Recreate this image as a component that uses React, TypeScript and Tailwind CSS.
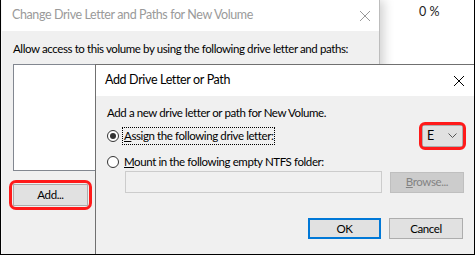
import React from 'react';

const font = { fontFamily: 'Lato, "Liberation Sans", Arial, sans-serif' };

function CloseIcon({ className }: { className?: string }) {
    return (
        <svg width="12" height="12" viewBox="0 0 12 12" className={className}>
            <path d="M1 1 L11 11 M11 1 L1 11" stroke="currentColor" strokeWidth="1" />
        </svg>
    );
}

function Radio({ checked }: { checked?: boolean }) {
    return (
        <span className="flex h-[12px] w-[12px] shrink-0 items-center justify-center rounded-full border border-[#333] bg-white">
            {checked && <span className="h-[6px] w-[6px] rounded-full bg-[#333]" />}
        </span>
    );
}

function OuterDialog() {
    return (
        <div className="absolute left-[1px] top-0 flex h-[254px] w-[378px] flex-col border-r border-[#bdbdbd] shadow-[4px_0_10px_rgba(0,0,0,0.18)]">
            <div className="flex h-[31px] items-center justify-between bg-white pl-[10px] pr-[8px]">
                <span className="whitespace-nowrap text-[12.5px] tracking-[-0.4px] text-[#9a9a9a]">Change Drive Letter and Paths for New Volume</span>
                <CloseIcon className="text-[#9a9a9a]" />
            </div>
            <div className="flex-1 bg-[#f0f0f0] px-[11px] text-[11.5px] tracking-[-0.4px]">
                <div className="mt-[10px] whitespace-nowrap leading-[16px] text-black">
                    Allow access to this volume by using the following drive letter and paths:
                </div>
                <div className="mt-[7px] h-[107px] w-[300px] border border-[#828790] bg-white" />
                <div className="mt-[13px] inline-flex rounded-[3px] p-0 outline-3 outline-offset-[1px] outline-[#ff1a1a]">
                    <div className="flex h-[22px] w-[75px] items-center justify-center border border-[#adadad] bg-[#e1e1e1] text-black">
                        Add...
                    </div>
                </div>
            </div>
        </div>
    );
}

function InnerDialog() {
    return (
        <div className="absolute left-[94px] top-[64px] flex h-[191px] w-[381px] flex-col border border-[#707070] bg-[#f0f0f0]">
            <div className="flex h-[31px] items-center justify-between bg-white pl-[9px] pr-[10px]">
                <span className="whitespace-nowrap text-[12.5px] tracking-[-0.35px] text-black">Add Drive Letter or Path</span>
                <CloseIcon className="text-black" />
            </div>
            <div className="flex flex-1 flex-col whitespace-nowrap px-[11px] text-[11.5px] leading-[16px] tracking-[-0.4px] text-black">
                <div className="mt-[9px]">Add a new drive letter or path for New Volume.</div>
                <div className="mt-[4px] flex items-center justify-between">
                    <div className="flex items-center gap-[3px]">
                        <Radio checked />
                        <span className="border border-dotted border-black px-[1px]">
                            <span className="underline">A</span>ssign the following drive letter:
                        </span>
                    </div>
                    <div className="mr-[1px] rounded-[3px] outline-3 outline-offset-[0px] outline-[#ff1a1a]">
                        <div className="flex h-[22px] w-[41px] items-center justify-between border border-[#adadad] bg-[#e1e1e1] pl-[4px] pr-[5px]">
                            <span className="text-[12.5px]">E</span>
                            <svg width="9" height="6" viewBox="0 0 9 6">
                                <path d="M0.5 0.5 L4.5 4.5 L8.5 0.5" stroke="#555" fill="none" strokeWidth="1" />
                            </svg>
                        </div>
                    </div>
                </div>
                <div className="mt-[7px] flex items-center gap-[3px] pl-0">
                    <Radio />
                    <span className="px-[2px]">
                        <span className="underline">M</span>ount in the following empty NTFS folder:
                    </span>
                </div>
                <div className="mt-[1px] flex items-center pl-[18px]">
                    <div className="h-[22px] w-[257px] border border-[#cccccc] bg-[#f0f0f0]" />
                    <div className="ml-[8px] flex h-[21px] w-[74px] items-center justify-center border border-[#bfbfbf] bg-[#cccccc] text-[#838383]">
                        <span><span className="underline">B</span>rowse...</span>
                    </div>
                </div>
                <div className="mt-[25px] flex justify-end gap-[8px] pr-[1px]">
                    <div className="flex h-[21px] w-[73px] items-center justify-center border-2 border-[#0078d7] bg-[#e1e1e1]">OK</div>
                    <div className="flex h-[21px] w-[74px] items-center justify-center border border-[#adadad] bg-[#e1e1e1]">Cancel</div>
                </div>
            </div>
        </div>
    );
}

export default function App() {
    return (
        <div className="relative h-[255px] w-[475px] overflow-hidden border-x border-b border-black bg-white" style={font}>
            <div className="absolute left-[418px] top-[3px] text-[12.5px] text-[#222]">0 %</div>
            <OuterDialog />
            <InnerDialog />
        </div>
    );
}
